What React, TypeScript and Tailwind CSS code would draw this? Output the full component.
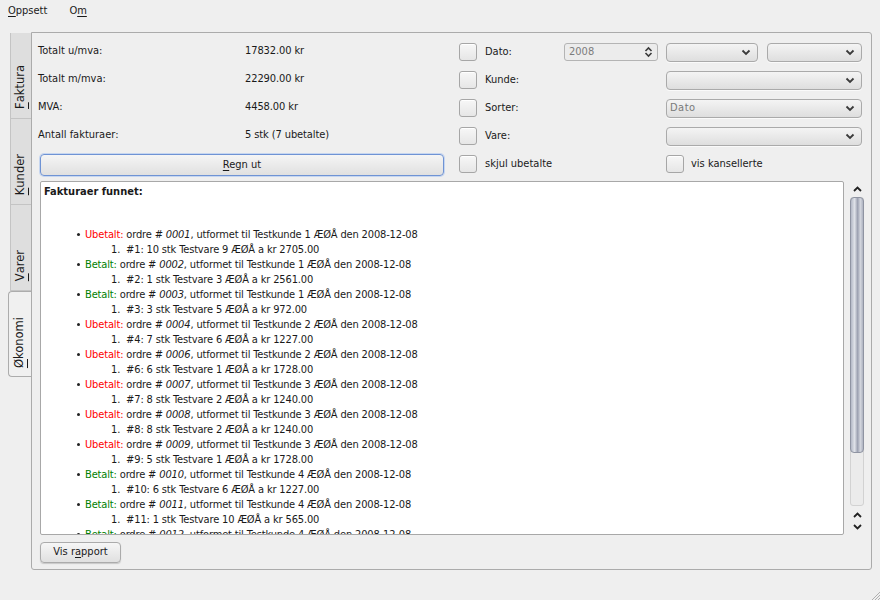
import React from 'react';

const font = "font-['DejaVu_Sans_Condensed','DejaVu_Sans',sans-serif]";

function U({ children }: { children: React.ReactNode }) {
  return <span className="underline underline-offset-[2px]">{children}</span>;
}

function Chevron({ up = false, className = '' }: { up?: boolean; className?: string }) {
  return (
    <svg width="9" height="6" viewBox="0 0 9 6" className={className}>
      <path
        d={up ? 'M1 5 L4.5 1.5 L8 5' : 'M1 1 L4.5 4.5 L8 1'}
        fill="none"
        stroke="#222"
        strokeWidth="1.8"
      />
    </svg>
  );
}

function CheckBox() {
  return (
    <div className="w-[18px] h-[18px] shrink-0 rounded-[3px] border border-[#a6a6a6] bg-[linear-gradient(#f7f7f7,#e6e6e6)] shadow-[inset_0_1px_0_#fff]" />
  );
}

function Combo({ value = '', className = '' }: { value?: string; className?: string }) {
  return (
    <div
      className={`h-[19px] rounded-[4px] border border-[#aaaaaa] bg-[linear-gradient(#f4f4f4,#dedede)] flex items-center justify-between pl-[3px] pr-[6px] shadow-[0_1px_0_#fafafa] ${className}`}
    >
      <span className="text-[#7a7a7a] tracking-[0.5px]">{value}</span>
      <svg width="10" height="7" viewBox="0 0 10 7">
        <path d="M1.5 1.5 L5 5 L8.5 1.5" fill="none" stroke="#3a3a3a" strokeWidth="1.8" />
      </svg>
    </div>
  );
}

function SideTab({ label, mnemonic, active = false }: { label: string; mnemonic: string; active?: boolean }) {
  return (
    <div
      className={
        active
          ? 'h-[86px] w-[23px] -mr-px z-10 bg-[#f0f0f0] border border-r-0 border-[#acacac] rounded-l-[4px] flex flex-col items-center justify-end pb-[8px]'
          : 'h-[86px] w-[21px] ml-[2px] bg-[#dedede] border-l border-b border-[#c4c4c4] flex flex-col items-center justify-end pb-[9px]'
      }
    >
      <span className="[writing-mode:vertical-rl] rotate-180 text-[#1a1a1a] font-['DejaVu_Sans',sans-serif] text-[11.5px] leading-none">
        <U>{mnemonic}</U>
        {label}
      </span>
    </div>
  );
}

const orders = [
  { paid: false, no: '0001', kunde: 1, line: '#1: 10 stk Testvare 9 ÆØÅ a kr 2705.00' },
  { paid: true, no: '0002', kunde: 1, line: '#2: 1 stk Testvare 3 ÆØÅ a kr 2561.00' },
  { paid: true, no: '0003', kunde: 1, line: '#3: 3 stk Testvare 5 ÆØÅ a kr 972.00' },
  { paid: false, no: '0004', kunde: 2, line: '#4: 7 stk Testvare 6 ÆØÅ a kr 1227.00' },
  { paid: false, no: '0006', kunde: 2, line: '#6: 6 stk Testvare 1 ÆØÅ a kr 1728.00' },
  { paid: false, no: '0007', kunde: 3, line: '#7: 8 stk Testvare 2 ÆØÅ a kr 1240.00' },
  { paid: false, no: '0008', kunde: 3, line: '#8: 8 stk Testvare 2 ÆØÅ a kr 1240.00' },
  { paid: false, no: '0009', kunde: 3, line: '#9: 5 stk Testvare 1 ÆØÅ a kr 1728.00' },
  { paid: true, no: '0010', kunde: 4, line: '#10: 6 stk Testvare 6 ÆØÅ a kr 1227.00' },
  { paid: true, no: '0011', kunde: 4, line: '#11: 1 stk Testvare 10 ÆØÅ a kr 565.00' },
  { paid: true, no: '0012', kunde: 4, line: '#12: 2 stk Testvare 4 ÆØÅ a kr 1530.00' },
];

const summary = [
  ['Totalt u/mva:', '17832.00 kr'],
  ['Totalt m/mva:', '22290.00 kr'],
  ['MVA:', '4458.00 kr'],
  ['Antall fakturaer:', '5 stk (7 ubetalte)'],
];

export default function App() {
  return (
    <div className={`w-[880px] h-[600px] bg-[#efefef] text-[11px] text-[#1a1a1a] flex flex-col overflow-hidden ${font}`}>
      {/* menu */}
      <div className="h-[22px] flex items-center pl-[8px] gap-[22px] pt-[1px]">
        <span><U>O</U>ppsett</span>
        <span>O<U>m</U></span>
      </div>

      <div className="flex pl-[8px] pt-[10px]">
        {/* tabs */}
        <div className="w-[23px] pt-[1px] flex flex-col">
          <SideTab label="aktura" mnemonic="F" />
          <SideTab label="under" mnemonic="K" />
          <SideTab label="arer" mnemonic="V" />
          <SideTab label="konomi" mnemonic="Ø" active />
        </div>

        {/* panel */}
        <div className="w-[841px] h-[538px] border border-[#ababab] rounded-r-[3px] rounded-bl-[3px] bg-[#efefef] pl-[6px] pr-[6px] flex flex-col">
          <div className="flex pt-[4px]">
            {/* summary */}
            <div className="w-[407px] flex flex-col">
              {summary.map(([k, v]) => (
                <div key={k} className="h-[28px] flex items-center">
                  <span className="w-[207px]">{k}</span>
                  <span className="tracking-[-0.1px]">{v}</span>
                </div>
              ))}
              <button className="mt-[5px] ml-[2px] w-[404px] h-[22px] rounded-[4px] border border-[#6f93d4] bg-[linear-gradient(#f5f5f5,#e0e0e0)] shadow-[0_0_0_1px_#c6d6f0]">
                <U>R</U>egn ut
              </button>
            </div>

            {/* filters */}
            <div className="ml-[14px] w-[403px] flex flex-col pt-[1px]">
              <div className="h-[28px] flex items-center">
                <CheckBox />
                <span className="ml-[8px] w-[79px]">Dato:</span>
                <div className="w-[94px] h-[18px] rounded-[3px] border border-[#b4b4b4] bg-[#ececec] flex items-center justify-between pl-[4px] pr-[4px]">
                  <span className="text-[#7c7c7c]">2008</span>
                  <svg width="9" height="12" viewBox="0 0 9 12">
                    <path d="M1.5 5 L4.5 2 L7.5 5 M1.5 7 L4.5 10 L7.5 7" fill="none" stroke="#3a3a3a" strokeWidth="1.6" />
                  </svg>
                </div>
                <Combo className="ml-[8px] w-[92px]" />
                <Combo className="ml-[9px] w-[95px]" />
              </div>
              <div className="h-[28px] flex items-center">
                <CheckBox />
                <span className="ml-[8px] w-[181px]">Kunde:</span>
                <Combo className="w-[196px]" />
              </div>
              <div className="h-[28px] flex items-center">
                <CheckBox />
                <span className="ml-[8px] w-[181px]">Sorter:</span>
                <Combo className="w-[196px]" value="Dato" />
              </div>
              <div className="h-[28px] flex items-center">
                <CheckBox />
                <span className="ml-[8px] w-[181px]">Vare:</span>
                <Combo className="w-[196px]" />
              </div>
              <div className="h-[28px] flex items-center">
                <CheckBox />
                <span className="ml-[8px] w-[181px]">skjul ubetalte</span>
                <CheckBox />
                <span className="ml-[7px]">vis kansellerte</span>
              </div>
            </div>
          </div>

          {/* result browser */}
          <div className="mt-[3px] ml-[2px] flex h-[354px]">
            <div className="w-[804px] h-full bg-white border border-[#a8a8a8] rounded-[2px] overflow-hidden pl-[3px] pt-[2px]">
              <div className="font-bold leading-[15px]">Fakturaer funnet:</div>
              <div className="mt-[28px] tracking-[-0.15px]">
                {orders.map((o) => (
                  <div key={o.no} className="leading-[15px]">
                    <div className="flex items-center pl-[33px]">
                      <span className="w-[3px] h-[3px] rounded-full bg-[#222] mr-[5px]" />
                      <span className={o.paid ? 'text-[#008000]' : 'text-[#ff0000]'}>
                        {o.paid ? 'Betalt:' : 'Ubetalt:'}
                      </span>
                      <span className="whitespace-pre">
                        {' ordre # '}
                        <i>{o.no}</i>
                        {`, utformet til Testkunde ${o.kunde} ÆØÅ den 2008-12-08`}
                      </span>
                    </div>
                    <div className="pl-[67px] whitespace-pre">{`1.  ${o.line}`}</div>
                  </div>
                ))}
              </div>
            </div>

            {/* scrollbar */}
            <div className="ml-[5px] w-[16px] flex flex-col items-center">
              <div className="h-[16px] flex items-center justify-center">
                <Chevron up />
              </div>
              <div className="w-[14px] h-[309px] rounded-[3px] border border-[#d2d2d2] bg-[#ebebeb]">
                <div className="h-[256px] -m-px rounded-[4px] border border-[#8f94a2] bg-[linear-gradient(90deg,#b3b8c6,#dfe2e8_30%,#9ca1b1_55%,#d3d6de_78%,#aeb3c1)]" />
              </div>
              <div className="mt-[6px] flex flex-col items-center gap-[6px]">
                <Chevron up />
                <Chevron />
              </div>
            </div>
          </div>

          <div className="mt-[7px] ml-[2px]">
            <button className="w-[81px] h-[21px] rounded-[4px] border border-[#ababab] bg-[linear-gradient(#f6f6f6,#e0e0e0)] shadow-[0_1px_1px_#c8c8c8]">
              Vis r<U>a</U>pport
            </button>
          </div>
        </div>
      </div>

      <div className="flex-1 relative">
        <svg width="10" height="10" viewBox="0 0 10 10" className="absolute right-0 bottom-0">
          <path d="M10 2 L2 10 M10 5 L5 10 M10 8 L8 10" stroke="#b0b0b0" strokeWidth="1" />
        </svg>
      </div>
    </div>
  );
}
